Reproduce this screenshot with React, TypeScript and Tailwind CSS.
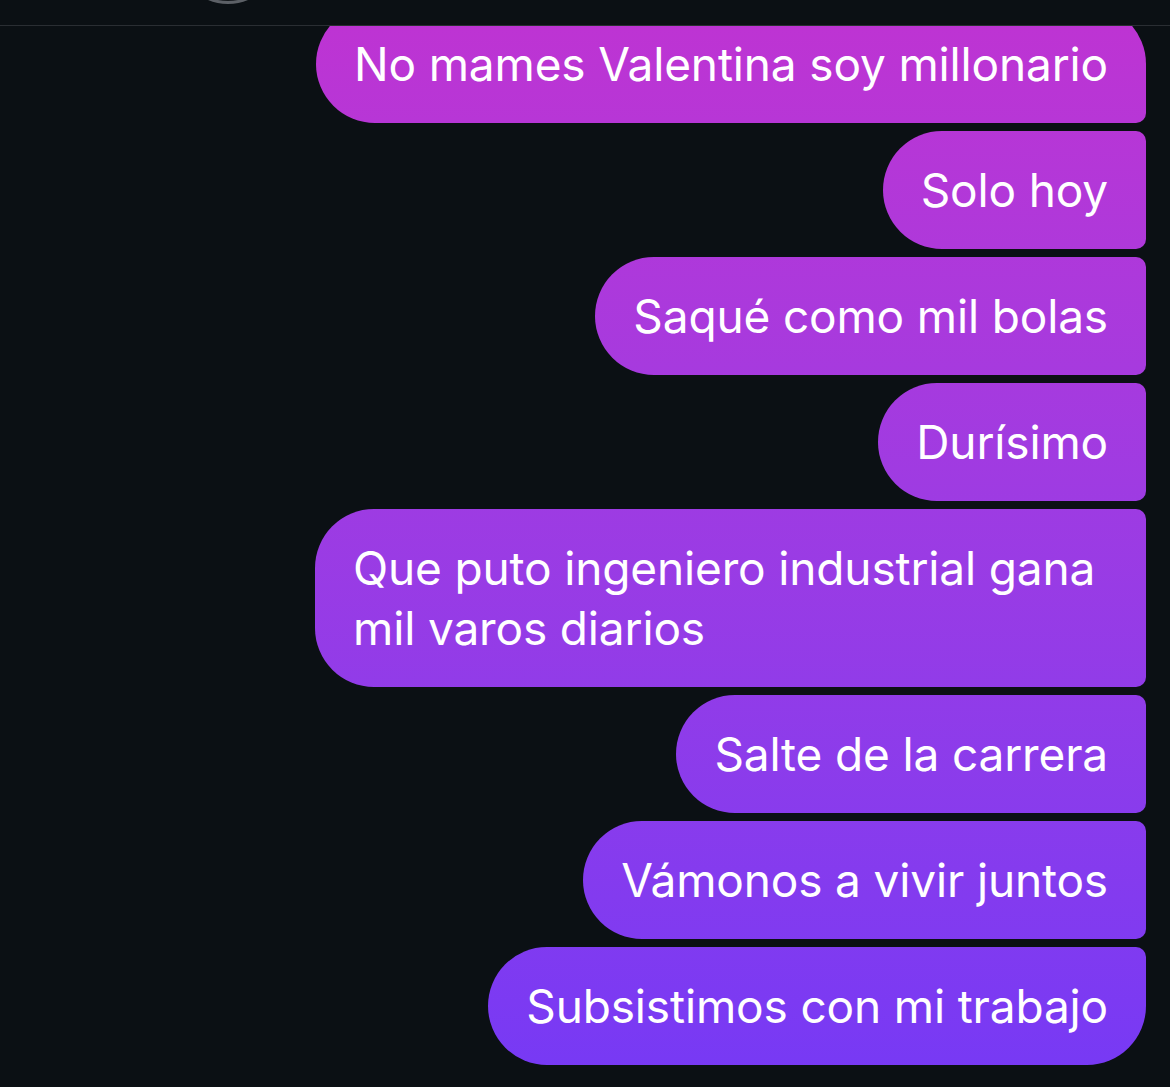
const messages = [
  { text: 'No mames Valentina soy millonario', first: true },
  { text: 'Solo hoy' },
  { text: 'Saqué como mil bolas' },
  { text: 'Durísimo' },
  { text: 'Que puto ingeniero industrial gana mil varos diarios', wrap: true },
  { text: 'Salte de la carrera' },
  { text: 'Vámonos a vivir juntos' },
  { text: 'Subsistimos con mi trabajo', last: true },
];

export default function App() {
  return (
    <div
      className="w-[1170px] h-[1087px] bg-[#0b1014] flex flex-col overflow-hidden"
      style={{ fontFamily: 'Inter, "Noto Sans", sans-serif' }}
    >
      {/* header, mostly scrolled off the top */}
      <div className="relative h-[26px] shrink-0 border-b border-[#2a2e33] z-10 bg-[#0b1014] overflow-hidden">
        <div className="absolute left-[178px] top-[-96px] w-[100px] h-[100px] rounded-full border-[3px] border-[#5c6066] bg-[#15191d]" />
      </div>

      <div className="flex-1 overflow-hidden">
        <div className="flex flex-col items-end gap-2 pr-[24px] mt-[-21.5px]">
          {messages.map(m => (
            <div
              key={m.text}
              className={[
                'bg-fixed bg-linear-to-b from-[#bf33d2] to-[#7639f5] text-white text-[46px] leading-[60px] px-[38px] py-[29px] tracking-[-0.15px]',
                'rounded-l-[59px]',
                m.first ? 'rounded-tr-[59px]' : 'rounded-tr-[10px]',
                m.last ? 'rounded-br-[59px]' : 'rounded-br-[10px]',
                m.wrap ? 'w-[831px]' : 'whitespace-nowrap',
              ].join(' ')}
            >
              {m.text}
            </div>
          ))}
        </div>
      </div>
    </div>
  );
}
